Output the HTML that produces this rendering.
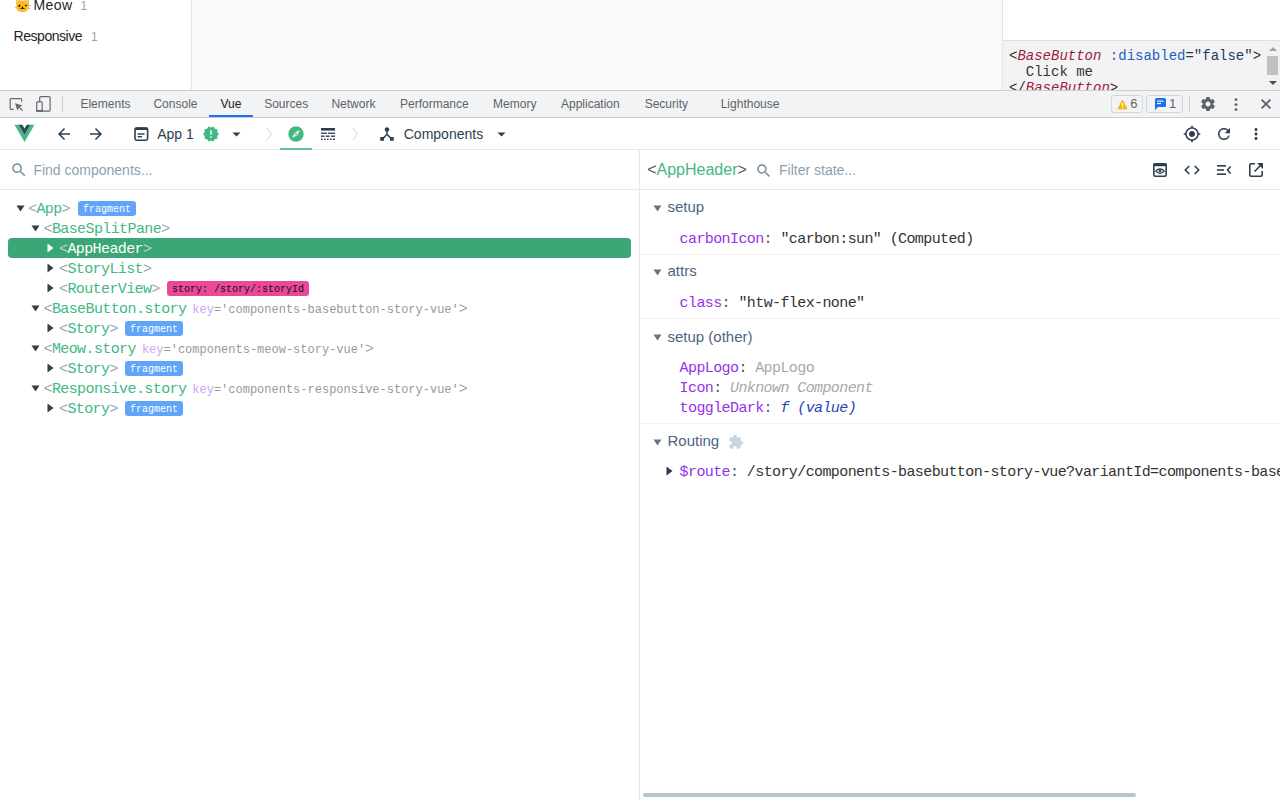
<!DOCTYPE html>
<html><head><meta charset="utf-8"><style>
html,body{margin:0;padding:0}
body{width:1280px;height:800px;overflow:hidden;position:relative;background:#fff;font-family:"Liberation Sans",sans-serif}
.t{position:absolute;line-height:1;white-space:pre}
.r{position:absolute;display:block}
.bd{height:15px;line-height:17px;font-family:"Liberation Mono",monospace;font-size:10px;text-align:center;border-radius:3px;font-weight:normal}
</style></head><body>
<div class="r" style="left:0px;top:0px;width:191px;height:90px;background:#fff;"></div>
<div class="r" style="left:191px;top:0px;width:1px;height:90px;background:#e5e5e7;"></div>
<div class="r" style="left:192px;top:0px;width:810px;height:90px;background:#f9f9f9;"></div>
<div class="r" style="left:1002px;top:0px;width:1px;height:90px;background:#e5e5e7;"></div>
<div class="r" style="left:1003px;top:0px;width:277px;height:40px;background:#fff;"></div>
<div class="r" style="left:1003px;top:40px;width:277px;height:1px;background:#e0e0e0;"></div>
<div class="r" style="left:1003px;top:41px;width:277px;height:49px;background:#f3f3f3;"></div>
<div class="t" style="left:33.5px;top:-2px;font-family:'Liberation Sans', sans-serif;font-size:14px;color:#1f1f1f;letter-spacing:0.4px">Meow</div>
<div class="t" style="left:80.5px;top:0px;font-family:'Liberation Sans', sans-serif;font-size:12px;color:#a3a3a3;">1</div>
<div class="t" style="left:13.5px;top:29px;font-family:'Liberation Sans', sans-serif;font-size:14px;color:#1f1f1f;letter-spacing:-0.45px">Responsive</div>
<div class="t" style="left:91px;top:31px;font-family:'Liberation Sans', sans-serif;font-size:12px;color:#a3a3a3;">1</div>
<svg class="r" style="left:12px;top:0px;" width="20" height="14" viewBox="0 0 20 14"><path d="M4.2 0 H16.9 V6 Q16.9 12.1 10.5 12.1 Q4.2 12.1 4.2 6 Z" fill="#f9bd22"/><rect x="5.5" y="0" width="1.5" height="2.2" fill="#f8c3c8"/><rect x="14.3" y="0" width="1.5" height="2.2" fill="#f8c3c8"/><rect x="8.3" y="0" width="4.5" height="0.9" fill="#fde9c8"/><rect x="9.2" y="1.3" width="0.8" height="1.4" fill="#f59a2a"/><rect x="11.2" y="1.3" width="0.8" height="1.4" fill="#f59a2a"/><ellipse cx="7.4" cy="5.7" rx="0.9" ry="1.2" fill="#111"/><ellipse cx="14" cy="5.5" rx="1.1" ry="0.8" fill="#111"/><ellipse cx="10.5" cy="7.6" rx="0.7" ry="1.1" fill="#111"/><path d="M8.4 8.6 Q10.5 8 12.6 8.6" stroke="#111" stroke-width="0.9" fill="none"/><path d="M3 7.4 H4.6 M16.5 5.6 H18.5 M16.5 8.4 H18" stroke="#9aa3ad" stroke-width="0.8"/></svg>
<div class="t" style="left:1009px;top:49px;font-family:'Liberation Mono', monospace;font-size:14px;color:#333;">&lt;<i style="color:#9a1c3c">BaseButton</i> <span style="color:#1d5fc2">:disabled</span>=<span style="color:#1b3a6b">"false"</span>&gt;</div>
<div class="t" style="left:1009px;top:65px;font-family:'Liberation Mono', monospace;font-size:14px;color:#333;">  Click me</div>
<div class="t" style="left:1009px;top:81px;font-family:'Liberation Mono', monospace;font-size:14px;color:#333;">&lt;/<i style="color:#9a1c3c">BaseButton</i>&gt;</div>
<div class="r" style="left:1266px;top:41px;width:14px;height:49px;background:#f1f1f1;"></div>
<svg class="r" style="left:1268px;top:46px;" width="10" height="6" viewBox="0 0 10 6"><path d="M1 5 L5 1 L9 5Z" fill="#a3a3a3"/></svg>
<div class="r" style="left:1267px;top:56px;width:11px;height:19px;background:#c1c1c1;"></div>
<svg class="r" style="left:1268px;top:80px;" width="10" height="6" viewBox="0 0 10 6"><path d="M1 1 L5 5 L9 1Z" fill="#505050"/></svg>
<div class="r" style="left:1003px;top:90px;width:277px;height:1px;background:#cbcdd1;"></div>
<div class="r" style="left:0px;top:90px;width:1280px;height:1px;background:#cbcdd1;"></div>
<div class="r" style="left:0px;top:91px;width:1280px;height:26px;background:#f1f3f4;"></div>
<div class="r" style="left:0px;top:117px;width:1280px;height:1px;background:#cbcdd1;"></div>
<svg class="r" style="left:9px;top:96px;" width="16" height="16" viewBox="0 0 16 16"><path d="M4.8 13.3 H2.2 Q1.2 13.3 1.2 12.3 V3.6 Q1.2 2.6 2.2 2.6 H11.7 Q12.7 2.6 12.7 3.6 V5.8" stroke="#67696c" stroke-width="1.2" fill="none"/><path d="M6.1 7.2 L13.6 9.6 L10.7 10.9 L13.9 14.1 L13 15 L9.8 11.8 L8.4 14.7 Z" fill="#67696c"/></svg>
<svg class="r" style="left:35px;top:95px;" width="18" height="18" viewBox="0 0 18 18"><rect x="4.7" y="1.7" width="10.4" height="14.4" rx="1" stroke="#67696c" stroke-width="1.2" fill="none"/><rect x="1.7" y="6.8" width="5.5" height="9.3" rx="0.8" stroke="#67696c" stroke-width="1.2" fill="#f1f3f4"/><rect x="1.1" y="14.9" width="6.7" height="1.8" fill="#67696c"/></svg>
<div class="r" style="left:62px;top:96px;width:1px;height:16px;background:#cbcdd1;"></div>
<div class="t" style="left:80.45px;top:98px;font-family:'Liberation Sans', sans-serif;font-size:12px;color:#5f6368;">Elements</div>
<div class="t" style="left:153.45px;top:98px;font-family:'Liberation Sans', sans-serif;font-size:12px;color:#5f6368;">Console</div>
<div class="t" style="left:220.45px;top:98px;font-family:'Liberation Sans', sans-serif;font-size:12px;color:#202124;">Vue</div>
<div class="t" style="left:264.2px;top:98px;font-family:'Liberation Sans', sans-serif;font-size:12px;color:#5f6368;">Sources</div>
<div class="t" style="left:331.45px;top:98px;font-family:'Liberation Sans', sans-serif;font-size:12px;color:#5f6368;">Network</div>
<div class="t" style="left:400.0px;top:98px;font-family:'Liberation Sans', sans-serif;font-size:12px;color:#5f6368;">Performance</div>
<div class="t" style="left:493.09999999999997px;top:98px;font-family:'Liberation Sans', sans-serif;font-size:12px;color:#5f6368;">Memory</div>
<div class="t" style="left:561.0px;top:98px;font-family:'Liberation Sans', sans-serif;font-size:12px;color:#5f6368;">Application</div>
<div class="t" style="left:644.7px;top:98px;font-family:'Liberation Sans', sans-serif;font-size:12px;color:#5f6368;">Security</div>
<div class="t" style="left:720.7px;top:98px;font-family:'Liberation Sans', sans-serif;font-size:12px;color:#5f6368;">Lighthouse</div>
<div class="r" style="left:209px;top:115px;width:44px;height:2px;background:#1a73e8;"></div>
<div class="r" style="left:1111px;top:95px;width:32px;height:18px;background:#f1f3f4;border:1px solid #d3d5d9;box-sizing:border-box;border-radius:3px"></div>
<svg class="r" style="left:1117px;top:99px;" width="11" height="11" viewBox="0 0 11 11"><path d="M5.5 1 L10.2 10 H0.8 Z" fill="#f2b600" stroke="#f2b600" stroke-width="0.6" stroke-linejoin="round"/><rect x="4.85" y="4" width="1.3" height="3.3" fill="#fff"/><rect x="4.85" y="8" width="1.3" height="1.2" fill="#fff"/></svg>
<div class="t" style="left:1130.3px;top:97px;font-family:'Liberation Sans', sans-serif;font-size:13px;color:#5f6368;">6</div>
<div class="r" style="left:1146px;top:95px;width:37px;height:18px;background:#f1f3f4;border:1px solid #d3d5d9;box-sizing:border-box;border-radius:3px"></div>
<svg class="r" style="left:1154px;top:97px;" width="13" height="14" viewBox="0 0 13 14"><path d="M1 2.5 Q1 1 2.5 1 H10.5 Q12 1 12 2.5 V8.5 Q12 10 10.5 10 H4 L1 13 Z" fill="#1a73e8"/><rect x="3" y="3.6" width="6.4" height="1.1" fill="#fff"/><rect x="3" y="6" width="4" height="1.1" fill="#fff"/></svg>
<div class="t" style="left:1169px;top:97px;font-family:'Liberation Sans', sans-serif;font-size:13px;color:#5f6368;">1</div>
<div class="r" style="left:1189px;top:96px;width:1px;height:16px;background:#cbcdd1;"></div>
<svg class="r" style="left:1201px;top:97px;" width="14" height="14" viewBox="0 0 16 16"><path fill="#5f6368" d="M13.9 8.8c0-.3.1-.5.1-.8s0-.5-.1-.8l1.7-1.3c.2-.1.2-.3.1-.5l-1.6-2.8c-.1-.2-.3-.2-.5-.2l-2 .8c-.4-.3-.9-.6-1.4-.8L10 .3C10 .1 9.8 0 9.6 0H6.4c-.2 0-.4.1-.4.3l-.3 2.1c-.5.2-.9.5-1.4.8l-2-.8c-.2-.1-.4 0-.5.2L.2 5.4c-.1.2-.1.4.1.5l1.7 1.3c0 .3-.1.5-.1.8s0 .5.1.8L.3 10.1c-.2.1-.2.3-.1.5l1.6 2.8c.1.2.3.2.5.2l2-.8c.4.3.9.6 1.4.8l.3 2.1c0 .2.2.3.4.3h3.2c.2 0 .4-.1.4-.3l.3-2.1c.5-.2.9-.5 1.4-.8l2 .8c.2.1.4 0 .5-.2l1.6-2.8c.1-.2.1-.4-.1-.5l-1.6-1.3zM8 10.8c-1.5 0-2.8-1.3-2.8-2.8S6.5 5.2 8 5.2s2.8 1.3 2.8 2.8-1.3 2.8-2.8 2.8z"/></svg>
<svg class="r" style="left:1233px;top:97px;" width="6" height="15" viewBox="0 0 6 15"><circle cx="3" cy="2.6" r="1.45" fill="#5f6368"/><circle cx="3" cy="7.6" r="1.45" fill="#5f6368"/><circle cx="3" cy="12.6" r="1.45" fill="#5f6368"/></svg>
<svg class="r" style="left:1260px;top:98px;" width="12" height="12" viewBox="0 0 12 12"><path d="M1.6 1.6 L10.4 10.4 M10.4 1.6 L1.6 10.4" stroke="#5f6368" stroke-width="1.9"/></svg>
<div class="r" style="left:0px;top:118px;width:1280px;height:31px;background:#fff;"></div>
<div class="r" style="left:0px;top:149px;width:1280px;height:1px;background:#e5e7eb;"></div>
<svg class="r" style="left:14px;top:124px;" width="21" height="19" viewBox="0 0 21 19"><path d="M0.5 0.75 H4.6 L10.5 10.9 L16.4 0.75 H20.5 L10.5 18 Z" fill="#42b883"/><path d="M4.6 0.75 H8.3 L10.5 4.6 L12.7 0.75 H16.4 L10.5 10.9 Z" fill="#35495e"/></svg>
<svg class="r" style="left:55px;top:125px;" width="18" height="18" viewBox="0 0 24 24"><path fill="#2c3e50" d="M20 11H7.83l5.59-5.59L12 4l-8 8 8 8 1.41-1.41L7.83 13H20v-2z"/></svg>
<svg class="r" style="left:87px;top:125px;" width="18" height="18" viewBox="0 0 24 24"><path fill="#2c3e50" d="M12 4l-1.41 1.41L16.17 11H4v2h12.17l-5.58 5.59L12 20l8-8z"/></svg>
<svg class="r" style="left:133px;top:126px;" width="16" height="16" viewBox="0 0 16 16"><rect x="2" y="2" width="12.6" height="12.2" rx="1.6" fill="none" stroke="#2c3e50" stroke-width="1.6"/><rect x="2" y="1.4" width="12.6" height="2.6" rx="1" fill="#2c3e50"/><rect x="4.6" y="7.3" width="7" height="1.4" fill="#2c3e50"/><rect x="4.6" y="10" width="4.4" height="1.4" fill="#2c3e50"/></svg>
<div class="t" style="left:157.2px;top:127px;font-family:'Liberation Sans', sans-serif;font-size:14px;color:#2c3e50;">App 1</div>
<svg class="r" style="left:202.5px;top:126px;" width="16" height="16" viewBox="1 1 22 22"><path fill="#42b883" d="M23 12l-2.44-2.78.34-3.68-3.61-.82-1.89-3.18L12 3 8.6 1.54 6.71 4.72l-3.61.81.34 3.68L1 12l2.44 2.78-.34 3.69 3.61.82 1.89 3.18L12 21l3.4 1.46 1.89-3.18 3.61-.82-.34-3.68L23 12zm-10 5h-2v-2h2v2zm0-4h-2V7h2v6z"/></svg>
<svg class="r" style="left:232px;top:132px;" width="9" height="5" viewBox="0 0 9 5"><path d="M0.5 0.5 H8.5 L4.5 4.5Z" fill="#2c3e50"/></svg>
<svg class="r" style="left:266px;top:127px;" width="7" height="14" viewBox="0 0 7 14"><path d="M1 1 L5.5 7 L1 13" stroke="#d1d5db" stroke-width="1" fill="none"/></svg>
<svg class="r" style="left:352px;top:127px;" width="7" height="14" viewBox="0 0 7 14"><path d="M1 1 L5.5 7 L1 13" stroke="#d1d5db" stroke-width="1" fill="none"/></svg>
<svg class="r" style="left:288px;top:126px;" width="16" height="16" viewBox="0 0 16 16"><circle cx="8" cy="8" r="7.7" fill="#42b883"/><path d="M12 4 L9.2 9.2 L4 12 L6.8 6.8 Z" fill="#fff"/><circle cx="8" cy="8" r="1" fill="#42b883"/></svg>
<div class="r" style="left:280px;top:148px;width:32px;height:2px;background:#5ec295;"></div>
<svg class="r" style="left:320px;top:127px;" width="16" height="14" viewBox="0 0 16 14"><rect x="1" y="1" width="14" height="2.6" fill="#2c3e50"/><rect x="1" y="5.6" width="6" height="1.3" fill="#2c3e50"/><rect x="8" y="5.6" width="7" height="1.3" fill="#2c3e50"/><rect x="1" y="8.5" width="3.5" height="1.4" fill="#2c3e50"/><rect x="5.8" y="8.5" width="3.8" height="1.4" fill="#2c3e50"/><rect x="11" y="8.5" width="4" height="1.4" fill="#2c3e50"/><rect x="1" y="11.6" width="1.6" height="1.4" fill="#2c3e50"/><rect x="4" y="11.6" width="1.6" height="1.4" fill="#2c3e50"/><rect x="7" y="11.6" width="1.6" height="1.4" fill="#2c3e50"/><rect x="10" y="11.6" width="1.6" height="1.4" fill="#2c3e50"/><rect x="13" y="11.6" width="2" height="1.4" fill="#2c3e50"/></svg>
<svg class="r" style="left:378px;top:125px;" width="18" height="18" viewBox="0 0 24 24"><path fill="#2c3e50" d="M17 16l-4-4V8.82C14.16 8.4 15 7.3 15 6c0-1.66-1.34-3-3-3S9 4.34 9 6c0 1.3.84 2.4 2 2.82V12l-4 4H3v5h5v-3.05l4-4.2 4 4.2V21h5v-5h-4z"/></svg>
<div class="t" style="left:403.75px;top:127px;font-family:'Liberation Sans', sans-serif;font-size:14px;color:#2c3e50;">Components</div>
<svg class="r" style="left:497px;top:132px;" width="9" height="5" viewBox="0 0 9 5"><path d="M0.5 0.5 H8.5 L4.5 4.5Z" fill="#2c3e50"/></svg>
<svg class="r" style="left:1183px;top:125px;" width="18" height="18" viewBox="0 0 24 24"><path fill="#2c3e50" d="M12 8c-2.21 0-4 1.79-4 4s1.79 4 4 4 4-1.79 4-4-1.79-4-4-4zm8.94 3c-.46-4.17-3.77-7.48-7.94-7.94V1h-2v2.06C6.83 3.52 3.52 6.83 3.06 11H1v2h2.06c.46 4.17 3.77 7.48 7.94 7.94V23h2v-2.06c4.17-.46 7.48-3.77 7.94-7.94H23v-2h-2.06zM12 19c-3.87 0-7-3.13-7-7s3.13-7 7-7 7 3.13 7 7-3.13 7-7 7z"/></svg>
<svg class="r" style="left:1215px;top:125px;" width="18" height="18" viewBox="0 0 24 24"><path fill="#2c3e50" d="M17.65 6.35C16.2 4.9 14.21 4 12 4c-4.42 0-7.99 3.58-7.99 8s3.57 8 7.99 8c3.73 0 6.84-2.55 7.73-6h-2.08c-.82 2.33-3.04 4-5.65 4-3.31 0-6-2.69-6-6s2.69-6 6-6c1.66 0 3.14.69 4.22 1.78L13 11h7V4l-2.35 2.35z"/></svg>
<svg class="r" style="left:1247px;top:125px;" width="18" height="18" viewBox="0 0 24 24"><path fill="#2c3e50" d="M12 8c1.1 0 2-.9 2-2s-.9-2-2-2-2 .9-2 2 .9 2 2 2zm0 2c-1.1 0-2 .9-2 2s.9 2 2 2 2-.9 2-2-.9-2-2-2zm0 6c-1.1 0-2 .9-2 2s.9 2 2 2 2-.9 2-2-.9-2-2-2z"/></svg>
<div class="r" style="left:639px;top:150px;width:1px;height:650px;background:#e5e7eb;"></div>
<div class="r" style="left:0px;top:189px;width:639px;height:1px;background:#e5e7eb;"></div>
<div class="r" style="left:640px;top:189px;width:640px;height:1px;background:#e5e7eb;"></div>
<svg class="r" style="left:10px;top:161px;" width="18" height="18" viewBox="0 0 24 24"><path fill="#78909c" d="M15.5 14h-.79l-.28-.27C15.41 12.59 16 11.11 16 9.5 16 5.91 13.09 3 9.5 3S3 5.91 3 9.5 5.91 16 9.5 16c1.61 0 3.09-.59 4.23-1.57l.27.28v.79l5 4.99L20.49 19l-4.99-5zm-6 0C7.01 14 5 11.99 5 9.5S7.01 5 9.5 5 14 7.01 14 9.5 11.99 14 9.5 14z"/></svg>
<div class="t" style="left:33.4px;top:163px;font-family:'Liberation Sans', sans-serif;font-size:14px;color:#8ba3b1;">Find components...</div>
<div class="r" style="left:8px;top:238px;width:623px;height:20px;background:#3ba776;border-radius:4px"></div>
<svg class="r" style="left:15.5px;top:205px;" width="9" height="7" viewBox="0 0 9 7"><path d="M0.5 0.5 H8.5 L4.5 6.5Z" fill="#2c3e50"/></svg>
<div class="t" style="left:28.0px;top:202px;font-family:'Liberation Mono', monospace;font-size:15px;color:#000;letter-spacing:-0.6px;"><span style="color:#9ca3af">&lt;</span><span style="color:#42b883">App</span><span style="color:#9ca3af">&gt;</span></div>
<div class="r bd" style="left:78px;top:201px;width:58px;background:#60a5fa;color:#fff">fragment</div>
<svg class="r" style="left:31px;top:225px;" width="9" height="7" viewBox="0 0 9 7"><path d="M0.5 0.5 H8.5 L4.5 6.5Z" fill="#2c3e50"/></svg>
<div class="t" style="left:43.5px;top:222px;font-family:'Liberation Mono', monospace;font-size:15px;color:#000;letter-spacing:-0.6px;"><span style="color:#9ca3af">&lt;</span><span style="color:#42b883">BaseSplitPane</span><span style="color:#9ca3af">&gt;</span></div>
<svg class="r" style="left:46.5px;top:242.5px;" width="7" height="10" viewBox="0 0 7 10"><path d="M0.5 0.5 V9.5 L6.5 5Z" fill="#fff"/></svg>
<div class="t" style="left:59.0px;top:242px;font-family:'Liberation Mono', monospace;font-size:15px;color:#000;letter-spacing:-0.6px;"><span style="color:#c5d4cc">&lt;</span><span style="color:#fff">AppHeader</span><span style="color:#c5d4cc">&gt;</span></div>
<svg class="r" style="left:46.5px;top:262.5px;" width="7" height="10" viewBox="0 0 7 10"><path d="M0.5 0.5 V9.5 L6.5 5Z" fill="#2c3e50"/></svg>
<div class="t" style="left:59.0px;top:262px;font-family:'Liberation Mono', monospace;font-size:15px;color:#000;letter-spacing:-0.6px;"><span style="color:#9ca3af">&lt;</span><span style="color:#42b883">StoryList</span><span style="color:#9ca3af">&gt;</span></div>
<svg class="r" style="left:46.5px;top:282.5px;" width="7" height="10" viewBox="0 0 7 10"><path d="M0.5 0.5 V9.5 L6.5 5Z" fill="#2c3e50"/></svg>
<div class="t" style="left:59.0px;top:282px;font-family:'Liberation Mono', monospace;font-size:15px;color:#000;letter-spacing:-0.6px;"><span style="color:#9ca3af">&lt;</span><span style="color:#42b883">RouterView</span><span style="color:#9ca3af">&gt;</span></div>
<div class="r bd" style="left:167px;top:281px;width:142px;background:#ec4899;color:#111">story: /story/:storyId</div>
<svg class="r" style="left:31px;top:305px;" width="9" height="7" viewBox="0 0 9 7"><path d="M0.5 0.5 H8.5 L4.5 6.5Z" fill="#2c3e50"/></svg>
<div class="t" style="left:43.5px;top:302px;font-family:'Liberation Mono', monospace;font-size:15px;color:#000;letter-spacing:-0.6px;"><span style="color:#9ca3af">&lt;</span><span style="color:#42b883">BaseButton.story</span></div>
<div class="t" style="left:192.3px;top:304px;font-family:'Liberation Mono', monospace;font-size:12px;color:#000;"><span style="color:#cca3fb">key</span><span style="color:#999">='components-basebutton-story-vue'</span></div>
<div class="t" style="left:458.70000000000005px;top:302px;font-family:'Liberation Mono', monospace;font-size:15px;color:#000;letter-spacing:-0.6px;"><span style="color:#9ca3af">&gt;</span></div>
<svg class="r" style="left:46.5px;top:322.5px;" width="7" height="10" viewBox="0 0 7 10"><path d="M0.5 0.5 V9.5 L6.5 5Z" fill="#2c3e50"/></svg>
<div class="t" style="left:59.0px;top:322px;font-family:'Liberation Mono', monospace;font-size:15px;color:#000;letter-spacing:-0.6px;"><span style="color:#9ca3af">&lt;</span><span style="color:#42b883">Story</span><span style="color:#9ca3af">&gt;</span></div>
<div class="r bd" style="left:125px;top:321px;width:58px;background:#60a5fa;color:#fff">fragment</div>
<svg class="r" style="left:31px;top:345px;" width="9" height="7" viewBox="0 0 9 7"><path d="M0.5 0.5 H8.5 L4.5 6.5Z" fill="#2c3e50"/></svg>
<div class="t" style="left:43.5px;top:342px;font-family:'Liberation Mono', monospace;font-size:15px;color:#000;letter-spacing:-0.6px;"><span style="color:#9ca3af">&lt;</span><span style="color:#42b883">Meow.story</span></div>
<div class="t" style="left:141.9px;top:344px;font-family:'Liberation Mono', monospace;font-size:12px;color:#000;"><span style="color:#cca3fb">key</span><span style="color:#999">='components-meow-story-vue'</span></div>
<div class="t" style="left:365.1px;top:342px;font-family:'Liberation Mono', monospace;font-size:15px;color:#000;letter-spacing:-0.6px;"><span style="color:#9ca3af">&gt;</span></div>
<svg class="r" style="left:46.5px;top:362.5px;" width="7" height="10" viewBox="0 0 7 10"><path d="M0.5 0.5 V9.5 L6.5 5Z" fill="#2c3e50"/></svg>
<div class="t" style="left:59.0px;top:362px;font-family:'Liberation Mono', monospace;font-size:15px;color:#000;letter-spacing:-0.6px;"><span style="color:#9ca3af">&lt;</span><span style="color:#42b883">Story</span><span style="color:#9ca3af">&gt;</span></div>
<div class="r bd" style="left:125px;top:361px;width:58px;background:#60a5fa;color:#fff">fragment</div>
<svg class="r" style="left:31px;top:385px;" width="9" height="7" viewBox="0 0 9 7"><path d="M0.5 0.5 H8.5 L4.5 6.5Z" fill="#2c3e50"/></svg>
<div class="t" style="left:43.5px;top:382px;font-family:'Liberation Mono', monospace;font-size:15px;color:#000;letter-spacing:-0.6px;"><span style="color:#9ca3af">&lt;</span><span style="color:#42b883">Responsive.story</span></div>
<div class="t" style="left:192.3px;top:384px;font-family:'Liberation Mono', monospace;font-size:12px;color:#000;"><span style="color:#cca3fb">key</span><span style="color:#999">='components-responsive-story-vue'</span></div>
<div class="t" style="left:458.70000000000005px;top:382px;font-family:'Liberation Mono', monospace;font-size:15px;color:#000;letter-spacing:-0.6px;"><span style="color:#9ca3af">&gt;</span></div>
<svg class="r" style="left:46.5px;top:402.5px;" width="7" height="10" viewBox="0 0 7 10"><path d="M0.5 0.5 V9.5 L6.5 5Z" fill="#2c3e50"/></svg>
<div class="t" style="left:59.0px;top:402px;font-family:'Liberation Mono', monospace;font-size:15px;color:#000;letter-spacing:-0.6px;"><span style="color:#9ca3af">&lt;</span><span style="color:#42b883">Story</span><span style="color:#9ca3af">&gt;</span></div>
<div class="r bd" style="left:125px;top:401px;width:58px;background:#60a5fa;color:#fff">fragment</div>
<div class="t" style="left:647.2px;top:162px;font-family:'Liberation Sans', sans-serif;font-size:16px;color:#000;"><span style="color:#4d5a6a">&lt;</span><span style="color:#42b883">AppHeader</span><span style="color:#4d5a6a">&gt;</span></div>
<svg class="r" style="left:755px;top:161.5px;" width="17.5" height="17.5" viewBox="0 0 24 24"><path fill="#78909c" d="M15.5 14h-.79l-.28-.27C15.41 12.59 16 11.11 16 9.5 16 5.91 13.09 3 9.5 3S3 5.91 3 9.5 5.91 16 9.5 16c1.61 0 3.09-.59 4.23-1.57l.27.28v.79l5 4.99L20.49 19l-4.99-5zm-6 0C7.01 14 5 11.99 5 9.5S7.01 5 9.5 5 14 7.01 14 9.5 11.99 14 9.5 14z"/></svg>
<div class="t" style="left:779px;top:163px;font-family:'Liberation Sans', sans-serif;font-size:14px;color:#8ba3b1;">Filter state...</div>
<svg class="r" style="left:1152px;top:162px;" width="16" height="16" viewBox="0 0 16 16"><rect x="1.8" y="1.8" width="12.4" height="12.4" rx="1.5" fill="none" stroke="#2c3e50" stroke-width="1.6"/><rect x="1.5" y="1.2" width="13" height="3" rx="1" fill="#2c3e50"/><path d="M3.6 9.2 Q8 4.8 12.4 9.2 Q8 13.6 3.6 9.2Z" fill="none" stroke="#2c3e50" stroke-width="1.2"/><circle cx="8" cy="9.2" r="1.3" fill="#2c3e50"/></svg>
<svg class="r" style="left:1183px;top:162px;" width="18" height="16" viewBox="0 0 18 16"><path d="M6.2 4 L2.3 8 L6.2 12 M11.8 4 L15.7 8 L11.8 12" stroke="#2c3e50" stroke-width="1.6" fill="none"/></svg>
<svg class="r" style="left:1216px;top:162px;" width="16" height="16" viewBox="0 0 16 16"><rect x="1" y="3" width="9" height="1.6" fill="#2c3e50"/><rect x="1" y="7.2" width="7" height="1.6" fill="#2c3e50"/><rect x="1" y="11.4" width="9" height="1.6" fill="#2c3e50"/><path d="M14.6 4.5 L11.5 8 L14.6 11.5" stroke="#2c3e50" stroke-width="1.6" fill="none"/></svg>
<svg class="r" style="left:1248px;top:162px;" width="16" height="16" viewBox="0 0 16 16"><path d="M7 1.8 H3 Q1.8 1.8 1.8 3 V13 Q1.8 14.2 3 14.2 H13 Q14.2 14.2 14.2 13 V9" stroke="#2c3e50" stroke-width="1.6" fill="none"/><path d="M9 1 H15 V7 Z" fill="#2c3e50"/><path d="M13.5 2.5 L6.5 9.5" stroke="#2c3e50" stroke-width="1.6"/></svg>
<svg class="r" style="left:653px;top:204.5px;" width="9" height="7" viewBox="0 0 9 7"><path d="M0.5 0.5 H8.5 L4.5 6.5Z" fill="#6b7280"/></svg>
<div class="t" style="left:667.5px;top:199px;font-family:'Liberation Sans', sans-serif;font-size:15px;color:#4b6584;">setup</div>
<div class="t" style="left:679.6px;top:232px;font-family:'Liberation Mono', monospace;font-size:15px;color:#000;letter-spacing:-0.6px;"><span style="color:#9333ea">carbonIcon</span><span style="color:#555">:</span> <span style="color:#333">"carbon:sun"</span> <span style="color:#333">(Computed)</span></div>
<div class="r" style="left:640px;top:254px;width:640px;height:1px;background:#f0f0f2;"></div>
<svg class="r" style="left:653px;top:268.5px;" width="9" height="7" viewBox="0 0 9 7"><path d="M0.5 0.5 H8.5 L4.5 6.5Z" fill="#6b7280"/></svg>
<div class="t" style="left:667.5px;top:263px;font-family:'Liberation Sans', sans-serif;font-size:15px;color:#4b6584;">attrs</div>
<div class="t" style="left:679.6px;top:296px;font-family:'Liberation Mono', monospace;font-size:15px;color:#000;letter-spacing:-0.6px;"><span style="color:#9333ea">class</span><span style="color:#555">:</span> <span style="color:#333">"htw-flex-none"</span></div>
<div class="r" style="left:640px;top:318px;width:640px;height:1px;background:#f0f0f2;"></div>
<svg class="r" style="left:653px;top:334.0px;" width="9" height="7" viewBox="0 0 9 7"><path d="M0.5 0.5 H8.5 L4.5 6.5Z" fill="#6b7280"/></svg>
<div class="t" style="left:667.5px;top:328.5px;font-family:'Liberation Sans', sans-serif;font-size:15px;color:#4b6584;">setup (other)</div>
<div class="t" style="left:679.6px;top:361px;font-family:'Liberation Mono', monospace;font-size:15px;color:#000;letter-spacing:-0.6px;"><span style="color:#9333ea">AppLogo</span><span style="color:#555">:</span> <span style="color:#a8a8a8">AppLogo</span></div>
<div class="t" style="left:679.6px;top:381px;font-family:'Liberation Mono', monospace;font-size:15px;color:#000;letter-spacing:-0.6px;"><span style="color:#9333ea">Icon</span><span style="color:#555">:</span> <i style="color:#a8a8a8">Unknown Component</i></div>
<div class="t" style="left:679.6px;top:401px;font-family:'Liberation Mono', monospace;font-size:15px;color:#000;letter-spacing:-0.6px;"><span style="color:#9333ea">toggleDark</span><span style="color:#555">:</span> <i style="color:#1c46b8">f (value)</i></div>
<div class="r" style="left:640px;top:423px;width:640px;height:1px;background:#f0f0f2;"></div>
<svg class="r" style="left:653px;top:438.5px;" width="9" height="7" viewBox="0 0 9 7"><path d="M0.5 0.5 H8.5 L4.5 6.5Z" fill="#6b7280"/></svg>
<div class="t" style="left:667.5px;top:433px;font-family:'Liberation Sans', sans-serif;font-size:15px;color:#4b6584;">Routing</div>
<svg class="r" style="left:728px;top:434px;" width="16" height="16" viewBox="0 0 24 24"><path fill="#cbd5e1" d="M20.5 11H19V7c0-1.1-.9-2-2-2h-4V3.5C13 2.12 11.88 1 10.5 1S8 2.12 8 3.5V5H4c-1.1 0-1.99.9-1.99 2v3.8H3.5c1.49 0 2.7 1.21 2.7 2.7s-1.21 2.7-2.7 2.7H2V20c0 1.1.9 2 2 2h3.8v-1.5c0-1.49 1.21-2.7 2.7-2.7 1.49 0 2.7 1.21 2.7 2.7V22H17c1.1 0 2-.9 2-2v-4h1.5c1.38 0 2.5-1.12 2.5-2.5S21.88 11 20.5 11z"/></svg>
<svg class="r" style="left:666px;top:466px;" width="7" height="10" viewBox="0 0 7 10"><path d="M0.5 0.5 V9.5 L6.5 5Z" fill="#2c3e50"/></svg>
<div class="t" style="left:679.6px;top:465px;font-family:'Liberation Mono', monospace;font-size:15px;color:#000;letter-spacing:-0.6px;"><span style="color:#9333ea">$route</span><span style="color:#555">:</span> <span style="color:#333">/story/components-basebutton-story-vue?variantId=components-basebutton-story-vue-0</span></div>
<div class="r" style="left:643px;top:793px;width:493px;height:4px;background:#b5c5cc;border-radius:2px"></div>
</body></html>
